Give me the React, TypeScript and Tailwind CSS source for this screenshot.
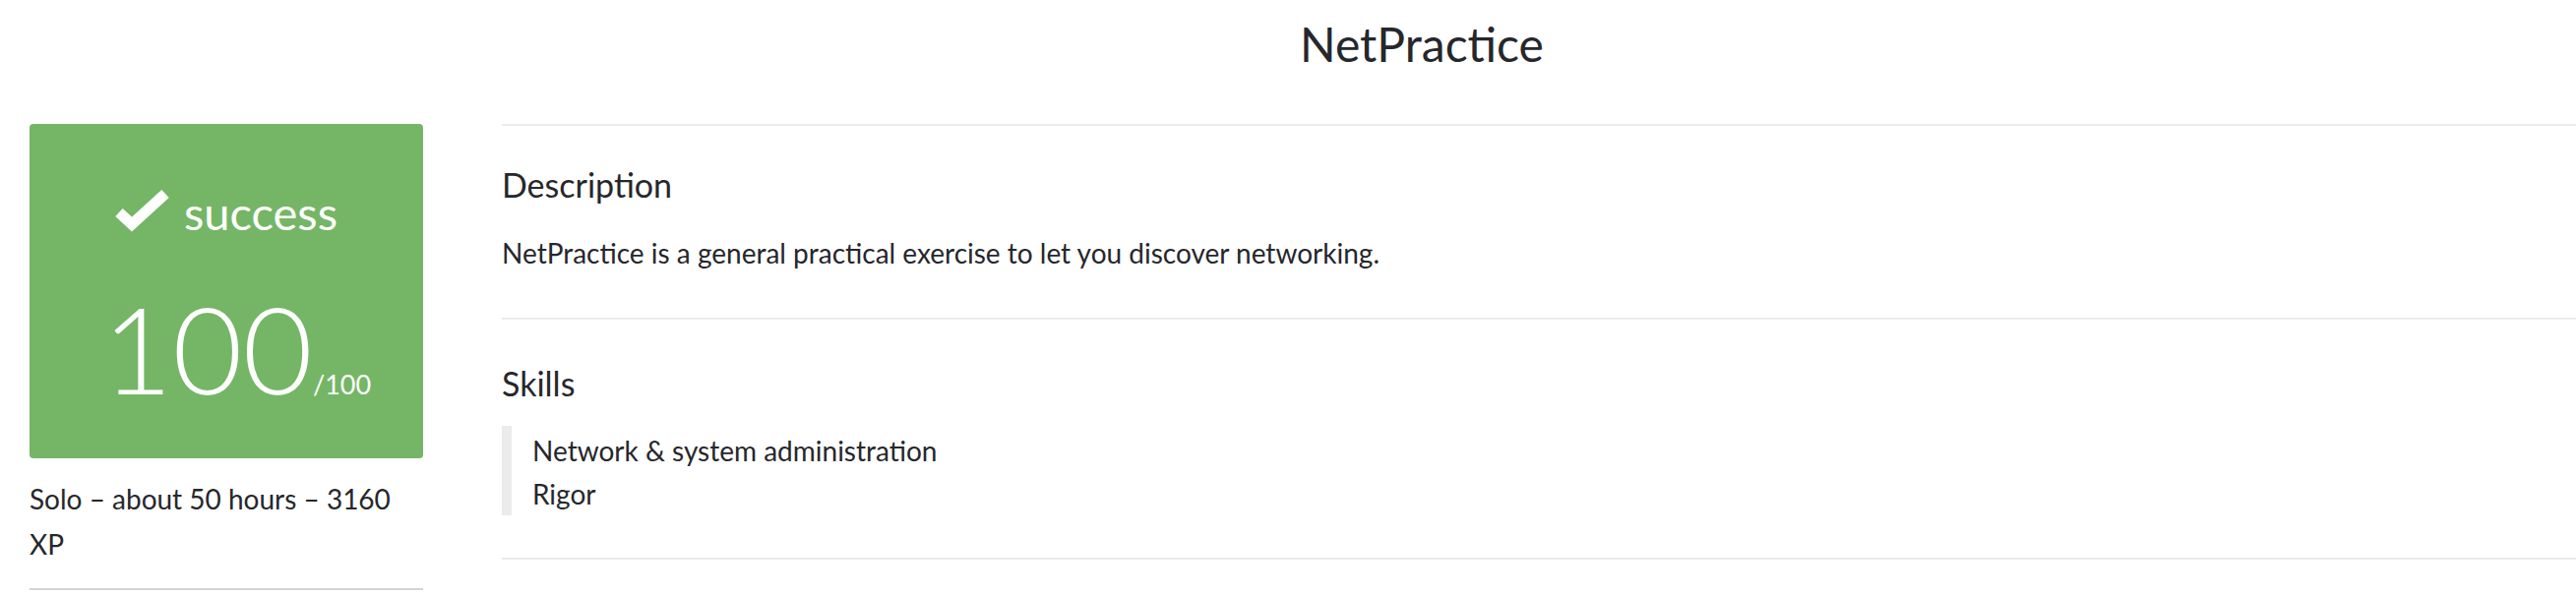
const green = "#74b666";

function Check() {
  return (
    <svg width="56" height="46" viewBox="0 0 56 46" className="mb-[4px] shrink-0">
      <polyline points="4,26 17,38 51,7" fill="none" stroke="white" strokeWidth="11" strokeLinejoin="miter" />
    </svg>
  );
}

export default function App() {
  return (
    <div className="h-[606px] w-[2618px] overflow-hidden bg-white font-['Lato',sans-serif] text-[#26272c]">
      <h1 className="h-[126px] pl-[272px] pt-[16px] text-center text-[48px] leading-[58px] font-normal">
        NetPractice
      </h1>

      <div className="flex items-start">
        {/* left: score */}
        <div className="ml-[30px] w-[400px] shrink-0">
          <div className="h-[340px] rounded-[4px] pt-[64px] text-white" style={{ background: green }}>
            <div className="flex items-end justify-center gap-[14px]">
              <Check />
              <span className="text-[47px] leading-[47px]">success</span>
            </div>
            <div className="mt-[52px] flex items-baseline justify-center pl-[21px]">
              <span className="text-[123px] leading-[123px] font-light">100</span>
              <span className="text-[27px] leading-[27px]">/100</span>
            </div>
          </div>
          <p className="mt-[18px] text-[28px] leading-[46px]">Solo – about 50 hours – 3160 XP</p>
          <div className="mt-[22px] border-t-2 border-[#d4d4d4]" />
        </div>

        {/* right: details */}
        <div className="ml-[80px] flex-1">
          <section className="h-[197px] border-t-2 border-[#ebebeb] pt-[40px]">
            <h2 className="text-[34px] leading-[40px]">Description</h2>
            <p className="mt-[32px] text-[28px] leading-[34px]">
              NetPractice is a general practical exercise to let you discover networking.
            </p>
          </section>
          <section className="h-[244px] border-t-2 border-[#ebebeb] pt-[45px]">
            <h2 className="text-[34px] leading-[40px]">Skills</h2>
            <ul className="mt-[23px] border-l-[10px] border-[#ebebeb] pl-[21px] pt-[3px] text-[28px] leading-[44px]">
              <li>Network &amp; system administration</li>
              <li>Rigor</li>
            </ul>
          </section>
          <section className="h-[60px] border-t-2 border-[#ebebeb]" />
        </div>
      </div>
    </div>
  );
}
